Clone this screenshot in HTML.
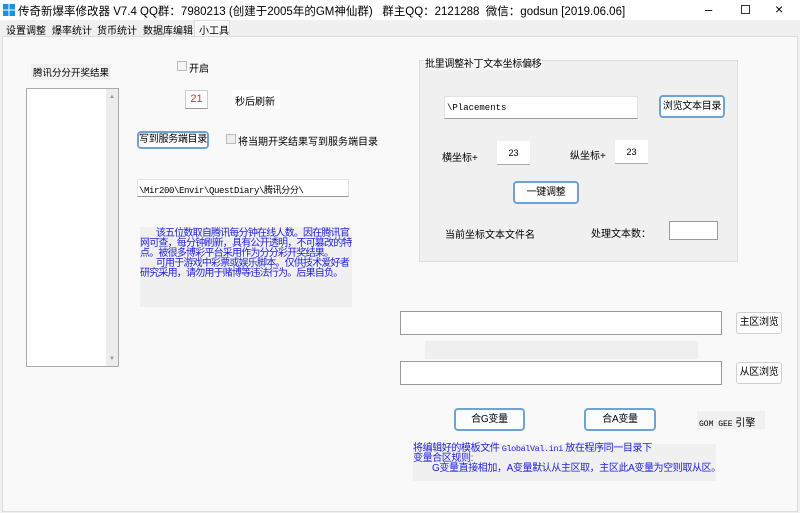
<!DOCTYPE html>
<html><head><meta charset="utf-8"><style>
*{margin:0;padding:0;box-sizing:border-box}
body{width:800px;height:513px;background:#f0f0f0;font-family:"Liberation Sans","Noto Sans CJK SC",sans-serif;font-size:10px;color:#000;position:relative;overflow:hidden}
.a{position:absolute;white-space:nowrap}
.mono{font-family:"Liberation Mono","Noto Sans CJK SC",monospace}
.btn{position:absolute;background:#fdfdfd;border:1px solid #d0d0d0;border-radius:3px;text-align:center;font-size:10px;white-space:nowrap;letter-spacing:-0.3px}
.bb{border:2px solid #6fa3d6;border-radius:4px}
.inp{position:absolute;background:#fff;border:1px solid #e3e3e3;border-bottom:1px solid #9a9a9a;white-space:nowrap;overflow:hidden}
.blue{color:#2020e0;font-size:10px;line-height:10px;letter-spacing:-0.4px}
</style></head><body>
<div class="a" style="left:0;top:0;width:800px;height:20px;background:#fff"></div>
<svg class="a" style="left:3px;top:4px" width="12" height="12"><rect x="0" y="0" width="5.5" height="5.5" fill="#1e90e0"/><rect x="6.5" y="0" width="5.5" height="5.5" fill="#1e90e0"/><rect x="0" y="6.5" width="5.5" height="5.5" fill="#1e90e0"/><rect x="6.5" y="6.5" width="5.5" height="5.5" fill="#1e90e0"/></svg>
<div class="a" style="left:18px;top:3px;font-size:11.5px">传奇新爆率修改器 V7.4 QQ群：7980213 (创建于2005年的GM神仙群)&nbsp;&nbsp; 群主QQ：2121288&nbsp; 微信：godsun [2019.06.06]</div>
<div class="a" style="left:705px;top:2px;font-size:13px">&#8211;</div>
<div class="a" style="left:741px;top:5px;width:9px;height:9px;border:1px solid #333"></div>
<div class="a" style="left:775px;top:1px;font-size:14px">×</div>
<div class="a" style="left:0;top:20px;width:800px;height:16px;background:#f0f0f0"></div>
<div class="a" style="left:6px;top:22px;font-size:10px">设置调整</div>
<div class="a" style="left:52px;top:22px;font-size:10px">爆率统计</div>
<div class="a" style="left:97px;top:22px;font-size:10px">货币统计</div>
<div class="a" style="left:143px;top:22px;font-size:10px">数据库编辑</div>
<div class="a" style="left:194px;top:20px;width:36px;height:17px;background:#f9f9f9;border:1px solid #ddd;border-bottom:none"></div>
<div class="a" style="left:199px;top:22px;font-size:10px">小工具</div>
<div class="a" style="left:2px;top:36px;width:796px;height:476px;background:#f9f9f9;border:1px solid #ddd"></div>

<div class="a" style="left:31px;top:64px;background:#f0f0f0;padding:1px 2px;font-size:9.5px">腾讯分分开奖结果</div>
<div class="a" style="left:26px;top:88px;width:93px;height:279px;background:#fff;border:1px solid #aaa"></div>
<div class="a" style="left:106px;top:89px;width:12px;height:277px;background:#ececec"></div>
<div class="a" style="left:109px;top:94px;font-size:6px;color:#999">▲</div>
<div class="a" style="left:109px;top:356px;font-size:6px;color:#999">▼</div>

<div class="a" style="left:177px;top:61px;width:10px;height:10px;border:1px solid #bbb;background:#f4f4f4"></div>
<div class="a" style="left:189px;top:60px">开启</div>
<div class="a" style="left:185px;top:90px;width:23px;height:19px;background:#fff;border:1px solid #ccc;border-bottom:1px solid #999;color:#d03030;font-size:11px;text-align:center;line-height:17px">21</div>
<div class="a" style="left:232px;top:90px;width:48px;height:19px;background:#fff;padding:3px 3px">秒后刷新</div>
<div class="btn bb" style="left:137px;top:131px;width:72px;height:18px;line-height:14px">写到服务端目录</div>
<div class="a" style="left:226px;top:134px;width:10px;height:10px;border:1px solid #bbb;background:#eee"></div>
<div class="a" style="left:238px;top:133px">将当期开奖结果写到服务端目录</div>

<div class="inp mono" style="left:137px;top:179px;width:212px;height:18px;font-size:9px;padding:3px 1px;letter-spacing:-0.4px">\Mir200\Envir\QuestDiary\腾讯分分\</div>
<div class="a" style="left:140px;top:227px;width:212px;height:80px;background:#f0f0f0"></div>
<div class="a blue" style="left:140px;top:229px;width:216px;white-space:normal;letter-spacing:-0.8px">&nbsp;&nbsp;&nbsp;&nbsp;&nbsp;&nbsp;&nbsp;&nbsp;该五位数取自腾讯每分钟在线人数。因在腾讯官网可查，每分钟刷新，具有公开透明，不可篡改的特点。被很多博彩平台采用作为分分彩开奖结果。<br>&nbsp;&nbsp;&nbsp;&nbsp;&nbsp;&nbsp;&nbsp;&nbsp;可用于游戏中彩票或娱乐脚本。仅供技术爱好者研究采用，请勿用于赌博等违法行为。后果自负。</div>

<div class="a" style="left:419px;top:60px;width:319px;height:202px;background:#f0f0f0;border:1px solid #ddd"></div>
<div class="a" style="left:424px;top:55px;background:#f9f9f9;padding:0 1px;letter-spacing:-0.3px">批里调整补丁文本坐标偏移</div>
<div class="inp mono" style="left:444px;top:96px;width:194px;height:23px;font-size:9px;padding:6px 2px">\Placements</div>
<div class="btn bb" style="left:659px;top:95px;width:66px;height:23px;line-height:19px">浏览文本目录</div>
<div class="a" style="left:442px;top:149px">横坐标+</div>
<div class="a" style="left:497px;top:141px;width:33px;height:24px;background:#fff;border-bottom:1px solid #aaa;text-align:center;line-height:24px;font-size:9px">23</div>
<div class="a" style="left:570px;top:147px">纵坐标+</div>
<div class="a" style="left:615px;top:140px;width:33px;height:24px;background:#fff;border-bottom:1px solid #aaa;text-align:center;line-height:24px;font-size:9px">23</div>
<div class="btn bb" style="left:513px;top:181px;width:66px;height:23px;line-height:19px">一键调整</div>
<div class="a" style="left:445px;top:226px">当前坐标文本文件名</div>
<div class="a" style="left:591px;top:225px">处理文本数：</div>
<div class="a" style="left:669px;top:221px;width:49px;height:19px;background:#fff;border:1px solid #999"></div>

<div class="a" style="left:400px;top:311px;width:322px;height:24px;background:#fff;border:1px solid #999"></div>
<div class="btn" style="left:736px;top:312px;width:46px;height:22px;line-height:20px">主区浏览</div>
<div class="a" style="left:425px;top:341px;width:273px;height:18px;background:#efefef"></div>
<div class="a" style="left:400px;top:361px;width:322px;height:24px;background:#fff;border:1px solid #999"></div>
<div class="btn" style="left:736px;top:362px;width:46px;height:22px;line-height:20px">从区浏览</div>

<div class="btn bb" style="left:454px;top:408px;width:71px;height:23px;line-height:19px">合G变量</div>
<div class="btn bb" style="left:584px;top:408px;width:72px;height:23px;line-height:19px">合A变量</div>
<div class="a" style="left:697px;top:411px;width:68px;height:18px;background:#f0f0f0;font-size:10px;padding:3px 2px"><span class="mono" style="font-size:8px">GOM GEE</span> 引擎</div>
<div class="a" style="left:413px;top:444px;width:303px;height:37px;background:#f0f0f0"></div>
<div class="a blue" style="left:413px;top:444px">将编辑好的模板文件 <span class="mono" style="font-size:8.5px">GlobalVal.ini</span> 放在程序同一目录下<br>变量合区规则:<br>&nbsp;&nbsp;&nbsp;&nbsp;&nbsp;&nbsp;&nbsp;&nbsp;G变量直接相加，A变量默认从主区取，主区此A变量为空则取从区。</div>
</body></html>
